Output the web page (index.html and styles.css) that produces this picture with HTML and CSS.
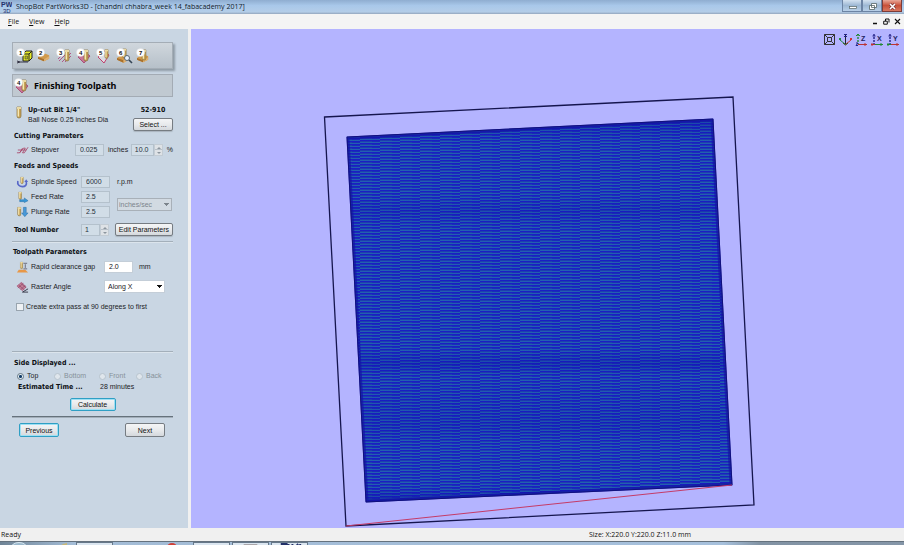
FILE: index.html
```html
<!DOCTYPE html>
<html lang="en">
<head>
<meta charset="utf-8">
<title>ShopBot PartWorks3D</title>
<link rel="stylesheet" href="styles.css">
</head>
<body>
<svg class="defs" aria-hidden="true">
  <symbol id="bit" viewBox="0 0 6 14"><path d="M1 1h4v9a2 2 0 0 1-4 0z" fill="#c8a458" stroke="#86703c" stroke-width=".7"/><path d="M2.300 1.500v9" stroke="#f6e8b4" stroke-width="1.400"/><path d="M1 1h4v2H1z" fill="#eadaa4"/></symbol>
  <symbol id="num" viewBox="0 0 9 9"><circle cx="4.500" cy="4.500" r="4" fill="#fff" stroke="#d8dce0" stroke-width=".4"/></symbol>
  <symbol id="block" viewBox="0 0 14 10"><path d="M0 5l4-3 2 1 2-2 5 2v4l-6 3-7-3z" fill="#d09a4c"/><path d="M0 5l7 2.500V10L0 7z" fill="#a8702c"/><path d="M7 7.500L13 4v3l-6 3z" fill="#deb070"/></symbol>
</svg>

<header class="titlebar">
  <svg class="logo" viewBox="0 0 12 13"><text x="1" y="6">PW</text><text x="3" y="12" class="sub">3D</text></svg>
  <span class="caption">ShopBot PartWorks3D - [chandni chhabra_week 14_fabacademy 2017]</span>
  <div class="winbtns">
    <button aria-label="Minimize"><svg viewBox="0 0 18 10"><rect x="6.500" y="5.500" width="7" height="2" fill="#fff" stroke="#566" stroke-width=".7"/></svg></button>
    <button aria-label="Restore"><svg viewBox="0 0 18 10"><path d="M8.500 2.500h5v4h-5z M6.500 4.500h5v4h-5z" fill="#fff" stroke="#566" stroke-width=".8"/></svg></button>
    <button class="close" aria-label="Close"><svg viewBox="0 0 18 10"><path d="M7 3l5 5M12 3L7 8" stroke="#733" stroke-width="3"/><path d="M7 3l5 5M12 3L7 8" stroke="#fff" stroke-width="1.600"/></svg></button>
  </div>
</header>

<nav class="menubar">
  <a href="#"><u>F</u>ile</a><a href="#"><u>V</u>iew</a><a href="#"><u>H</u>elp</a>
  <div class="docbtns">
    <button aria-label="Minimize document"><svg viewBox="0 0 7 7"><path d="M1 5.500h4" stroke="#111" stroke-width="1.500"/></svg></button>
    <button aria-label="Restore document"><svg viewBox="0 0 7 7"><path d="M2.500 1h3.500v3.500M2.500 1v2M.7 3.200h3.600v3H.7z" fill="none" stroke="#111"/></svg></button>
    <button aria-label="Close document"><svg viewBox="0 0 7 7"><path d="M1 1l5 5M6 1L1 6" stroke="#111" stroke-width="1.100"/></svg></button>
  </div>
</nav>

<main class="work">
  <aside class="panel">
    <div class="steps">
      <button aria-label="Step 1"><svg viewBox="0 0 20 16"><path d="M7 6l3-3h6v7l-3 3H7z" fill="#e8ec28" stroke="#222"/><path d="M7 6h6v7M13 6l3-3" fill="none" stroke="#222"/><path d="M9 8h2.500v3H9z" fill="#b8bc18" stroke="#444" stroke-width=".6"/><path d="M1 13l3 1h8M4 14l-3 1" stroke="#334" fill="none"/><use href="#num" x="0" y="0" width="9" height="9"/><text x="3" y="7">1</text></svg></button>
      <button aria-label="Step 2"><svg viewBox="0 0 20 16"><use href="#block" x="2" y="4" width="12" height="10"/><use href="#num" width="9" height="9"/><text x="3" y="7">2</text></svg></button>
      <button aria-label="Step 3"><svg viewBox="0 0 20 16"><path d="M2 11l6-6M3 13l8-8M6 14l9-9M9 14l6-6" stroke="#b05888" fill="none"/><use href="#bit" x="8" y="1" width="6" height="14"/><use href="#num" width="9" height="9"/><text x="3" y="7">3</text></svg></button>
      <button aria-label="Step 4"><svg viewBox="0 0 20 16"><path d="M2 9l7-5 5 4-6 7z" fill="#c87898" stroke="#a85078"/><use href="#bit" x="7" y="1" width="6" height="14"/><use href="#num" width="9" height="9"/><text x="3" y="7">4</text></svg></button>
      <button aria-label="Step 5"><svg viewBox="0 0 20 16"><path d="M2 9l6-6 5 4-5 8z" fill="#dcdce2" stroke="#c0406c"/><use href="#bit" x="8" y="1" width="5" height="11"/><use href="#num" width="9" height="9"/><text x="3" y="7">5</text></svg></button>
      <button aria-label="Step 6"><svg viewBox="0 0 20 16"><use href="#block" x="1" y="5" width="13" height="10"/><use href="#bit" x="6" y="0" width="5" height="12"/><circle cx="11" cy="10" r="2.500" fill="#e8f4ff" stroke="#567"/><path d="M13 12l3 3" stroke="#345" stroke-width="1.600"/><use href="#num" width="9" height="9"/><text x="3" y="7">6</text></svg></button>
      <button aria-label="Step 7"><svg viewBox="0 0 20 16"><use href="#block" x="1" y="5" width="12" height="10"/><use href="#bit" x="5" y="1" width="6" height="13"/><use href="#num" width="9" height="9"/><text x="3" y="7">7</text></svg></button>
    </div>
    <h1 class="heading"><svg viewBox="0 0 20 16"><path d="M2 9l7-5 5 4-6 7z" fill="#c87898" stroke="#a85078"/><use href="#bit" x="7" y="1" width="6" height="14"/><use href="#num" width="9" height="9"/><text x="3" y="7">4</text></svg>Finishing Toolpath</h1>

    <section class="tool">
      <svg class="toolicon"><use href="#bit"/></svg>
      <div class="toolname"><b>Up-cut Bit 1/4"</b><span>Ball Nose 0.25 inches Dia</span></div>
      <div class="toolside"><b>52-910</b><button class="btn">Select ...</button></div>
    </section>

    <h2>Cutting Parameters</h2>
    <div class="row step">
      <svg class="ico" viewBox="0 0 14 12"><path d="M1 9h3l3-5M4 9l4-5h2L7 9h2l4-6M2 6h9" fill="none" stroke="#a84468" stroke-width=".9"/></svg>
      <label for="stepover">Stepover</label>
      <input id="stepover" class="field" value="0.025" disabled>
      <span class="unit">inches</span>
      <span class="spin"><input class="field" aria-label="Stepover percent" value="10.0" disabled><i></i></span>
      <span class="pct">%</span>
    </div>

    <h2>Feeds and Speeds</h2>
    <div class="feeds">
      <div class="rows">
        <div class="row"><svg class="ico" viewBox="0 0 14 12"><use href="#bit" x="4" y="0" width="5" height="9"/><path d="M2 5c-1 4 2 6 5 6s5-2 4-5" fill="none" stroke="#5868c8" stroke-width="1.800"/><path d="M9 6l2-3 2 3z" fill="#5868c8"/></svg><label for="spindle">Spindle Speed</label><input id="spindle" class="field" value="6000" disabled></div>
        <div class="row"><svg class="ico" viewBox="0 0 14 12"><use href="#bit" x="2" y="0" width="5" height="10"/><path d="M4 9h5V7l4 3-4 2v-1H4z" fill="#3898d8" stroke="#2468a0" stroke-width=".5"/></svg><label for="feed">Feed Rate</label><input id="feed" class="field" value="2.5" disabled></div>
        <div class="row"><svg class="ico" viewBox="0 0 14 12"><use href="#bit" x="1" y="0" width="5" height="12"/><path d="M8 1h3v6h2l-3.500 4L6 7h2z" fill="#4898d8" stroke="#2468a0" stroke-width=".5"/></svg><label for="plunge">Plunge Rate</label><input id="plunge" class="field" value="2.5" disabled></div>
      </div>
      <div class="units"><span>r.p.m</span><select class="rate" aria-label="Rate units" disabled><option>inches/sec</option></select></div>
    </div>
    <div class="row toolno">
      <label for="toolnum"><b>Tool Number</b></label>
      <span class="spin"><input id="toolnum" class="field" value="1" disabled><i></i></span>
      <button class="btn">Edit Parameters</button>
    </div>
    <hr>

    <h2 class="params">Toolpath Parameters</h2>
    <div class="row rapid">
      <svg class="ico" viewBox="0 0 14 12"><path d="M1 12l2-3h7l3 3z" fill="#e89848"/><use href="#bit" x="4" y="0" width="4" height="9"/><path d="M8 2h4M8 8h4M10 3v4" stroke="#667"/></svg>
      <label for="gap">Rapid clearance gap</label>
      <input id="gap" class="field active" value="2.0"><span>mm</span>
    </div>
    <div class="row raster">
      <svg class="ico" viewBox="0 0 14 12"><path d="M1 5l5-4 5 5-4 4z" fill="#c88098" stroke="#a04870" stroke-width=".6"/><path d="M3 4l6 5M5 2l6 5M2 7l6-5M5 9l5-5" stroke="#7c4060" stroke-width=".6"/><path d="M13 8l-6 3.500h6" fill="none" stroke="#334"/></svg>
      <label for="angle">Raster Angle</label>
      <select id="angle"><option>Along X</option></select>
    </div>
    <label class="check"><input type="checkbox">Create extra pass at 90 degrees to first</label>
    <hr>

    <h2 class="side">Side Displayed ...</h2>
    <div class="radios">
      <label><input type="radio" name="side" checked>Top</label>
      <label class="off"><input type="radio" name="side" disabled>Bottom</label>
      <label class="off"><input type="radio" name="side" disabled>Front</label>
      <label class="off"><input type="radio" name="side" disabled>Back</label>
    </div>
    <div class="time"><b>Estimated Time ...</b><span>28 minutes</span></div>
    <button class="btn hot calc">Calculate</button>
    <hr class="dark">
    <div class="pager"><button class="btn hot">Previous</button><button class="btn">Next</button></div>
  </aside>

  <section class="view">
    <svg class="scene" viewBox="191 29 713 499" preserveAspectRatio="xMidYMid meet" role="img" aria-label="Toolpath preview">
      <defs>
        <!-- Raster passes: each 20-unit run sits one unit higher than the last -->
        <pattern id="pass" width="60" height="3" patternUnits="userSpaceOnUse">
          <rect width="60" height="3" fill="#1d3fae"/>
          <path d="M0 2.500h20M20 1.500h20M40 .5h20" stroke="#1a1ec4"/>
          <path d="M0 1.500h20M20 .5h20M40 2.500h20" stroke="#2260b0"/>
          <path d="M12 .5h8M32 2.500h8M52 1.500h8" stroke="#1a2cb8"/>
        </pattern>
        <linearGradient id="bands" x1="0" y1="0" x2="0" y2="1">
          <stop offset="0" stop-color="#0808a0" stop-opacity=".3"/><stop offset=".06" stop-color="#0808a0" stop-opacity="0"/>
          <stop offset=".2" stop-color="#0808a0" stop-opacity="0"/><stop offset=".24" stop-color="#0808a0" stop-opacity=".15"/>
          <stop offset=".28" stop-color="#0808a0" stop-opacity="0"/><stop offset=".6" stop-color="#0808a0" stop-opacity="0"/>
          <stop offset=".64" stop-color="#0808a0" stop-opacity=".25"/><stop offset=".67" stop-color="#0808a0" stop-opacity="0"/>
          <stop offset=".8" stop-color="#0808a0" stop-opacity=".15"/><stop offset=".85" stop-color="#0808a0" stop-opacity="0"/>
          <stop offset=".96" stop-color="#0808a0" stop-opacity="0"/><stop offset="1" stop-color="#0808a0" stop-opacity=".4"/>
        </linearGradient>
      </defs>
      <path d="M324.500 117L733 97L754 505L346 526z" fill="none" stroke="#15154e" stroke-width="1.300"/>
      <path d="M347 137L713 119L732 485L366 502z" fill="url(#pass)"/>
      <path d="M347 137L713 119L732 485L366 502z" fill="url(#bands)"/>
      <path d="M348 138L712 120L731 484L367 501z" fill="none" stroke="#1414a4" stroke-width="3" stroke-opacity=".7"/>
      <path d="M347 137L713 119L732 485L366 502z" fill="none" stroke="#10107c"/>
      <path d="M346 526L732 485" stroke="#c43b67"/>
    </svg>
    <div class="axes">
      <button aria-label="Fit view"><svg viewBox="0 0 13 13"><path d="M1.500 1.500h10v10h-10zM4.500 4.500h4v4h-4zM1.500 1.500l3 3M11.500 1.500l-3 3M1.500 11.500l3-3M11.500 11.500l-3-3" fill="none" stroke="#333"/></svg></button>
      <button aria-label="Isometric view"><svg viewBox="0 0 13 13"><path d="M6.500 1v10" stroke="#223"/><path d="M6.500 11.500L1 7M0 5l2 2M2 5L0 7" stroke="#284"/><path d="M6.500 11.500L12 7M11 5l2 2M13 5l-2 2" stroke="#c33"/><path d="M5 1.500h3M5 3.500h3" stroke="#228"/><path d="M4 10l2.500 2 2.500-2" fill="none" stroke="#352"/></svg></button>
      <button aria-label="View Z"><svg viewBox="0 0 13 13"><path d="M3 1v10" stroke="#283" stroke-width="1.400" stroke-dasharray="2 1"/><path d="M3 11.500h9" stroke="#b33"/><path d="M10 10v3" stroke="#b33"/><path d="M1 10h2l-2 2.500h2" fill="none" stroke="#228"/><path d="M1 3l2-2 2 2" fill="none" stroke="#283"/><text x="6" y="8">Z</text></svg></button>
      <button aria-label="View X"><svg viewBox="0 0 13 13"><path d="M3 1v10" stroke="#228" stroke-width="1.400" stroke-dasharray="2 1"/><path d="M3 11.500h9M10 10v3" stroke="#283"/><path d="M0 11.500h4M1 10v3" stroke="#b33"/><path d="M1.500 3h3" stroke="#228"/><text x="6" y="8">X</text></svg></button>
      <button aria-label="View Y"><svg viewBox="0 0 13 13"><path d="M3 1v10" stroke="#228" stroke-width="1.400" stroke-dasharray="2 1"/><path d="M3 11.500h9M10 10v3" stroke="#b33"/><path d="M0 11.500h4M1 10v3" stroke="#283"/><path d="M1.500 3h3" stroke="#228"/><text x="6" y="8">Y</text></svg></button>
    </div>
  </section>
</main>

<footer class="status"><span>Ready</span><span>Size: X:220.0 Y:220.0 Z:11.0 mm</span></footer>
<div class="taskbar">
  <svg viewBox="0 0 70 4"><ellipse cx="17" cy="6" rx="8" ry="5.500" fill="#9bb8cc" stroke="#d7e7f0"/><path d="M58 4l3-2 4-1v3z" fill="#c8b878"/></svg>
  <span class="app"><svg viewBox="0 0 36 4"><path d="M10 2h8v2h-8z" fill="#d8cc98"/></svg></span>
  <svg class="red" viewBox="0 0 70 4"><ellipse cx="54" cy="5" rx="5" ry="4" fill="#d04038"/></svg>
  <span class="app"></span>
  <span class="app"><svg viewBox="0 0 36 4"><path d="M11 1h14v3H11z" fill="#a8a4a8"/></svg></span>
  <span class="app"><svg viewBox="0 0 36 4"><path d="M9 1h6v3M17 1v3M21 4V1M24 4l3-3M29 1v3" fill="none" stroke="#223068" stroke-width="2"/></svg></span>
</div>
</body>
</html>
```

FILE: styles.css
```css
* { box-sizing: border-box; }
body {
  margin: 0; height: 100vh; overflow: hidden;
  display: flex; flex-direction: column;
  font: 7px/10px "Liberation Sans", sans-serif; color: #1c2226;
  background: #f0f0f0;
}
.defs { position: absolute; width: 0; height: 0; }
svg { display: block; flex: none; }
button, input, select { font: inherit; color: inherit; margin: 0; padding: 0; }
button { border: 0; background: none; }
h1, h2 { margin: 0; }
b, h2 { font: bold 7px/10px "DejaVu Sans Condensed", "DejaVu Sans", sans-serif; color: #0c0f12; }

.titlebar {
  flex: none; height: 14px; display: flex; align-items: center;
  background: linear-gradient(#8fadd0, #a9c8ea 40%, #b4cde8 85%, #93a6bd);
  font: 7px/12px "Open Sans", sans-serif; color: #101a28;
}
.logo { width: 12px; height: 13px; margin-right: 4px; font: bold 7px "Liberation Sans", sans-serif; fill: #24306c; }
.logo .sub { font-size: 6px; font-weight: normal; }
.winbtns { margin-left: auto; align-self: flex-start; display: flex; padding-right: 2px; }
.winbtns button { width: 20px; height: 12px; border: 1px solid #6c84a4; border-top: 0; background: linear-gradient(#d4e2f0, #9db8d4 50%, #b8d0e8); }
.winbtns .close { background: linear-gradient(#e8a898, #c85038 50%, #d87860); border-color: #7c3c38; }
.winbtns svg { width: 18px; height: 10px; }

.menubar { flex: none; height: 15px; display: flex; align-items: center; gap: 10px; padding: 0 3px 0 8px; background: #f4f4f4; font: 7px/12px "Open Sans", sans-serif; }
.menubar a { color: #101010; text-decoration: none; }
.docbtns { margin-left: auto; display: flex; gap: 4px; }
.docbtns svg { width: 7px; height: 7px; }

.work { flex: 1; min-height: 0; display: grid; grid-template-columns: 188px minmax(0, 1fr); column-gap: 3px; }
.panel { background: #c9d6e3; padding: 13px 15px 0 12px; display: flex; flex-direction: column; }

.steps { height: 27px; flex: none; display: flex; align-items: center; padding-left: 3px; border: 1px solid #a4adb6; background: linear-gradient(#d0d7dd, #b6c0c9); box-shadow: 2px 2px 2px #8f9ba6; }
.steps svg, .heading svg { width: 20px; height: 16px; font: bold 6px "Liberation Sans", sans-serif; fill: #111; }
.heading { flex: none; margin-top: 5px; height: 23px; display: flex; align-items: center; gap: 0; padding-left: 1px; border: 1px solid #a3abb4; background: #c0c9d1; font: bold 9px/12px "Noto Sans", sans-serif; color: #050505; }

.tool { display: flex; height: 34px; flex: none; padding-top: 8px; }
.toolicon { width: 6px; height: 14px; margin: 1px 6px 0 4px; }
.toolname span { display: block; }
.toolname { flex: 1; }
.toolside { display: flex; flex-direction: column; align-items: center; gap: 3px; line-height: 10px; }
.btn { flex: none; height: 13px; min-width: 40px; padding: 0 3px; line-height: 9px; border: 1px solid #767c82; border-radius: 2px; background: linear-gradient(#f4f5f6, #e8eaec 50%, #d4d8dc); color: #111; white-space: nowrap; }
.toolside .btn, .toolno .btn { box-shadow: 0 1px 1px #aab4be; }
.btn.hot { border-color: #2f9fc4; box-shadow: inset 0 0 0 1px #9ee0f4; }

h2 { flex: none; padding-left: 2px; }
.row { display: flex; align-items: center; flex: none; height: 15px; padding-left: 4px; }
.ico { width: 13px; height: 12px; margin-right: 2px; }
.field { width: 29px; height: 12px; padding: 0 4px; border: 1px solid #b4c1cc; background: #d1dde7; color: #26303a; border-radius: 0; }
.field.active { background: #fff; border-color: #c4ced8; color: #111; margin-right: 6px; }
.row label { width: 50px; white-space: nowrap; }
.spin { display: flex; width: 32px; }
.spin .field { flex: 1; width: 10px; min-width: 0; padding: 0 3px; }
.spin i { width: 9px; height: 12px; border: 1px solid #c3ccd4; background: linear-gradient(#dee2e6 45%, #b8c0c8 45%, #b8c0c8 55%, #dee2e6 55%); position: relative; }
.spin i::before, .spin i::after { content: ""; position: absolute; left: 2px; border: 2px solid transparent; border-width: 0 2px 2px; border-bottom-color: #8c959e; top: 2px; }
.spin i::after { top: 7px; transform: scaleY(-1); }
.step { margin: 1px 0 4px; }
.step label { width: 44px; }
.unit { width: 27px; padding-left: 4px; }
.pct { padding-left: 4px; }

.feeds { display: flex; flex: none; margin-top: 3px; }
.units { padding-left: 7px; display: flex; flex-direction: column; gap: 11px; padding-top: 3px; }
select { appearance: none; height: 13px; border: 1px solid #c4ced8; border-radius: 0; padding: 0 3px;
  background: linear-gradient(#111, #111) right 2px top 4px / 5px 1px no-repeat, linear-gradient(#111, #111) right 3px top 5px / 3px 1px no-repeat, linear-gradient(#111, #111) right 4px top 6px / 1px 1px no-repeat, #fff; }
.rate { width: 55px; padding: 0 1px; opacity: 1; color: #7c848c; border-color: #a8b0b8; background-color: #d2dae2;
  background-image: linear-gradient(#7c848c, #7c848c), linear-gradient(#7c848c, #7c848c), linear-gradient(#7c848c, #7c848c); }
.toolno { margin: 3px 0 4px; padding-left: 2px; }
.toolno label { width: 67px; }
.toolno .spin { width: 28px; margin-right: auto; }
hr { flex: none; width: 100%; margin: 0; border: 0; height: 2px; background: linear-gradient(#a3afba 50%, #dbe4ec 50%); }
hr.dark { background: linear-gradient(#66727c 50%, #a3afba 50%); }
.params { margin-top: 4px; padding-left: 1px; }
.rapid { margin-top: 2px; }
.rapid label, .raster label { width: 73px; }
.raster { margin-top: 5px; }
.raster select { width: 61px; }
.check { flex: none; display: flex; align-items: center; gap: 2px; height: 12px; margin: 7px 0 38px; padding-left: 4px; white-space: nowrap; }
.check input { appearance: none; width: 8px; height: 8px; border: 1px solid #98a4ae; background: #eef1f4; }

.side { margin-top: 5px; }
.radios { display: grid; flex: none; grid-template-columns: 37px 45px 37px 1fr; padding-left: 5px; height: 12px; margin-top: 2px; }
.radios label { display: flex; align-items: center; gap: 3px; }
.radios input { appearance: none; width: 7px; height: 7px; border: 1px solid #b8c4ce; border-radius: 50%; background: #dfe6ec; }
.radios input:checked { border-color: #667884; background: radial-gradient(#123c68 35%, #e4eef4 50%); }
.off { color: #87919a; }
.time { display: flex; flex: none; padding-left: 6px; }
.time b { width: 82px; }
.calc { align-self: center; width: 46px; margin: 6px 0 5px; }
.pager { display: flex; flex: none; justify-content: space-between; padding: 5px 8px 0 7px; }
.pager .btn { height: 14px; }

.view { position: relative; background: #b4b4ff; min-width: 0; min-height: 0; }
.scene { width: 100%; height: 100%; }
.axes { position: absolute; top: 4px; right: 4px; display: flex; gap: 3px; }
.axes svg { width: 13px; height: 13px; font: bold 7px "Liberation Sans", sans-serif; fill: #1c1c60; }

.status { flex: none; height: 13px; display: grid; grid-template-columns: 588px 1fr; align-items: center; padding-left: 1px; font: 7px/11px "Open Sans", sans-serif; color: #111; background: #f0f0f0; }
.taskbar { flex: none; height: 4px; display: flex; gap: 2px; overflow: hidden; border-top: 1px solid #65727e; background: linear-gradient(90deg, #6f8496, #a3bcd6 8%, #a6c0dc 80%, #8293a4 84%, #8596a8); }
.taskbar svg { height: 4px; width: 74px; }
.taskbar .red { width: 76px; }
.app { width: 37px; height: 6px; border: 1px solid #66788a; border-bottom: 0; background: #dbe6f0; }
.taskbar .app svg { width: 35px; }
```
